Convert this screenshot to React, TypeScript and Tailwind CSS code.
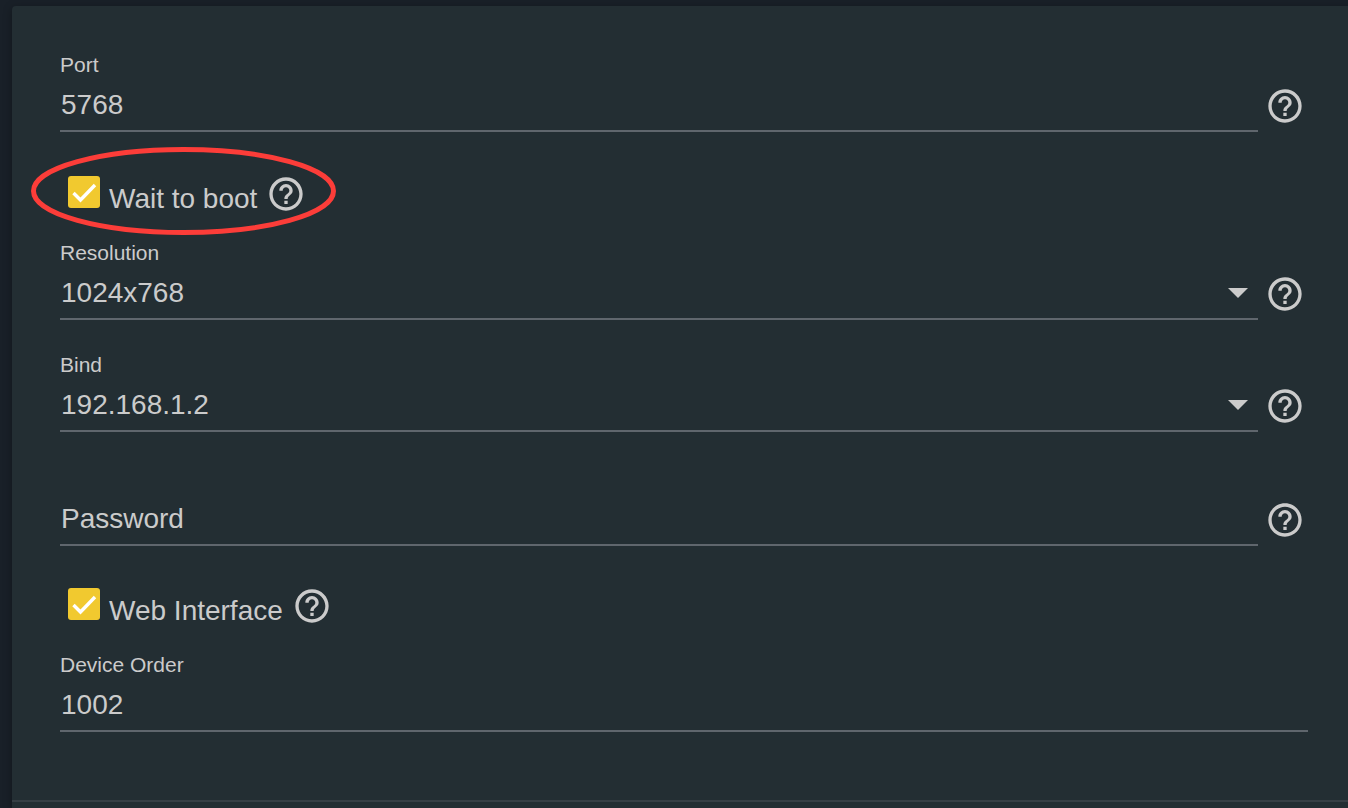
import React from 'react'
import { MdHelpOutline } from 'react-icons/md'
import { clsx } from 'clsx'

const HelpButton = ({ label, className }: { label: string; className?: string }) => (
    <button type="button" aria-label={`Help: ${label}`} className={clsx('flex shrink-0 justify-center', className)}>
        <MdHelpOutline size={40} />
    </button>
)

type FieldProps = {
    id: string
    label?: string
    help?: string
    className?: string
    children: React.ReactNode
}

const Field = ({ id, label, help, className, children }: FieldProps) => (
    <div className={clsx('flex items-end', className)}>
        <div className="min-w-0 grow border-b-2 border-[#5f666d]">
            {label && <label htmlFor={id} className="block text-[21px] leading-[26px]">{label}</label>}
            {children}
        </div>
        {help && <HelpButton label={help} className="mb-[6px] w-[50px] pl-1" />}
    </div>
)

const inputStyle = 'block h-[52px] w-full appearance-none bg-transparent pt-[2px] pl-px text-[28px] outline-none placeholder:text-[#cbcbcb] placeholder:opacity-100'

const Select = ({ id, options }: { id: string; options: string[] }) => (
    <div className="relative">
        <select id={id} className={inputStyle}>
            {options.map((option) => <option key={option}>{option}</option>)}
        </select>
        <svg className="pointer-events-none absolute top-[22px] right-[10px]" width="20" height="10" viewBox="0 0 20 10" fill="currentColor">
            <path d="M0 0h20L10 10z" />
        </svg>
    </div>
)

type CheckRowProps = {
    label: string
    checked: boolean
    onChange: (checked: boolean) => void
    circled?: boolean
    className?: string
}

const CheckRow = ({ label, checked, onChange, circled, className }: CheckRowProps) => (
    <div className={clsx('relative flex items-start gap-[9px] pl-2', className)}>
        <label className="flex items-start gap-[9px]">
            <span className="mt-[2px] grid">
                <input
                    type="checkbox"
                    checked={checked}
                    onChange={(e) => onChange(e.target.checked)}
                    className="col-start-1 row-start-1 size-8 appearance-none rounded-[3px] border-2 border-[#cbcbcb] checked:border-0 checked:bg-[#f1c92f]"
                />
                {checked && (
                    <svg className="pointer-events-none col-start-1 row-start-1" width="32" height="32" viewBox="0 0 32 32" fill="none" stroke="white" strokeWidth="3.4">
                        <path d="M5.5 17l7 7L27 9" />
                    </svg>
                )}
            </span>
            <span className="pt-[5px] text-[28px] leading-[39px]">{label}</span>
        </label>
        <HelpButton label={label} />
        {circled && (
            <svg className="pointer-events-none absolute -top-7 -left-[29px]" width="306" height="90" viewBox="0 0 306 90" fill="none" stroke="#fc3d39" strokeWidth="5">
                <ellipse cx="152.5" cy="45" rx="150" ry="41.5" />
            </svg>
        )}
    </div>
)

const App = () => {
    const [waitToBoot, setWaitToBoot] = React.useState(true)
    const [webInterface, setWebInterface] = React.useState(true)

    return (
        <div className="flex min-h-screen flex-col bg-[#192028] pt-[6px] pl-3 font-['Liberation_Sans',Arial,sans-serif] text-[#cbcbcb]">
            <main className="grow rounded-tl-[4px] bg-[#232e33] shadow-[0_2px_10px_rgba(0,0,0,0.3)]">
                <form className="border-b-2 border-[#363f45] pt-[46px] pr-10 pb-[68px] pl-12">
                    <Field id="port" label="Port" help="Port">
                        <input id="port" type="text" defaultValue="5768" className={inputStyle} />
                    </Field>

                    <CheckRow label="Wait to boot" checked={waitToBoot} onChange={setWaitToBoot} circled className="mt-[42px]" />

                    <Field id="resolution" label="Resolution" help="Resolution" className="mt-[22px]">
                        <Select id="resolution" options={['1024x768', '1280x720', '1920x1080']} />
                    </Field>

                    <Field id="bind" label="Bind" help="Bind" className="mt-8">
                        <Select id="bind" options={['192.168.1.2', '127.0.0.1', '0.0.0.0']} />
                    </Field>

                    <Field id="password" help="Password" className="mt-[60px]">
                        <input id="password" type="password" aria-label="Password" placeholder="Password" className={inputStyle} />
                    </Field>

                    <CheckRow label="Web Interface" checked={webInterface} onChange={setWebInterface} className="mt-10" />

                    <Field id="order" label="Device Order" className="mt-[22px]">
                        <input id="order" type="text" defaultValue="1002" className={inputStyle} />
                    </Field>
                </form>
            </main>
        </div>
    )
}

export default App
